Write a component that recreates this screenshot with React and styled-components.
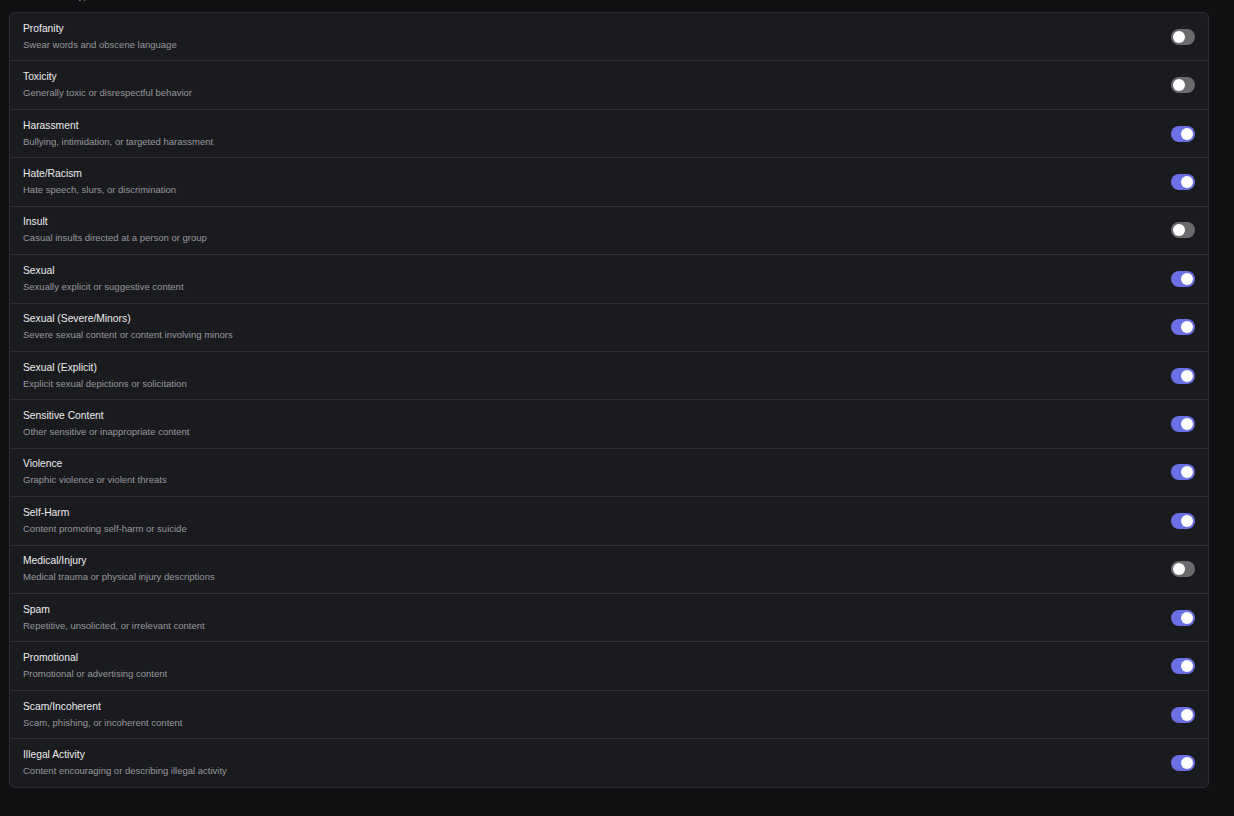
import React, { useState } from "react";
import styled, { createGlobalStyle } from "styled-components";

const GlobalStyle = createGlobalStyle`
  html, body {
    margin: 0;
    background: #111113;
    font-family: "Liberation Sans", Arial, sans-serif;
    overflow: hidden;
  }
`;

const Page = styled.div`
  padding: 0 25px 0 9px;
`;

const Caption = styled.div`
  margin-top: -11px;
  margin-bottom: 10px;
  padding-left: 14px;
  font-size: 10px;
  line-height: 13px;
  color: #8b8b91;
`;

const Panel = styled.div`
  background: #1a1b1f;
  border: 1px solid #2e2f34;
  border-radius: 6px;
  overflow: hidden;
`;

const Row = styled.div`
  display: flex;
  align-items: center;
  justify-content: space-between;
  padding: 8.7px 13px 8.74px;
  border-top: 1px solid #2e2f34;

  &:first-child {
    border-top: 0;
  }
`;

const Text = styled.div`
  display: flex;
  flex-direction: column;
  gap: 2px;
`;

const Title = styled.div`
  font-size: 10.3px;
  line-height: 14px;
  color: #ececee;
`;

const Desc = styled.div`
  font-size: 9.5px;
  line-height: 14px;
  color: #97979d;
`;

const Switch = styled.button`
  position: relative;
  width: 24px;
  height: 16px;
  padding: 0;
  border: 0;
  border-radius: 8px;
  background: ${props => (props.on ? "#6b70e4" : "#6b6b6e")};
  cursor: pointer;
  flex-shrink: 0;

  &::after {
    content: "";
    position: absolute;
    top: 2px;
    left: ${props => (props.on ? "10px" : "2px")};
    width: 12px;
    height: 12px;
    border-radius: 50%;
    background: #ffffff;
  }
`;

const categories = [
  ["Profanity", "Swear words and obscene language", false],
  ["Toxicity", "Generally toxic or disrespectful behavior", false],
  ["Harassment", "Bullying, intimidation, or targeted harassment", true],
  ["Hate/Racism", "Hate speech, slurs, or discrimination", true],
  ["Insult", "Casual insults directed at a person or group", false],
  ["Sexual", "Sexually explicit or suggestive content", true],
  ["Sexual (Severe/Minors)", "Severe sexual content or content involving minors", true],
  ["Sexual (Explicit)", "Explicit sexual depictions or solicitation", true],
  ["Sensitive Content", "Other sensitive or inappropriate content", true],
  ["Violence", "Graphic violence or violent threats", true],
  ["Self-Harm", "Content promoting self-harm or suicide", true],
  ["Medical/Injury", "Medical trauma or physical injury descriptions", false],
  ["Spam", "Repetitive, unsolicited, or irrelevant content", true],
  ["Promotional", "Promotional or advertising content", true],
  ["Scam/Incoherent", "Scam, phishing, or incoherent content", true],
  ["Illegal Activity", "Content encouraging or describing illegal activity", true],
];

export default function App() {
  const [enabled, setEnabled] = useState(() => categories.map(c => c[2]));

  const flip = i =>
    setEnabled(prev => prev.map((v, j) => (j === i ? !v : v)));

  return (
    <Page>
      <GlobalStyle />
      <Caption>Moderation types</Caption>
      <Panel>
        {categories.map(([name, desc], i) => (
          <Row key={name}>
            <Text>
              <Title>{name}</Title>
              <Desc>{desc}</Desc>
            </Text>
            <Switch on={enabled[i] ? 1 : 0} onClick={() => flip(i)} />
          </Row>
        ))}
      </Panel>
    </Page>
  );
}
